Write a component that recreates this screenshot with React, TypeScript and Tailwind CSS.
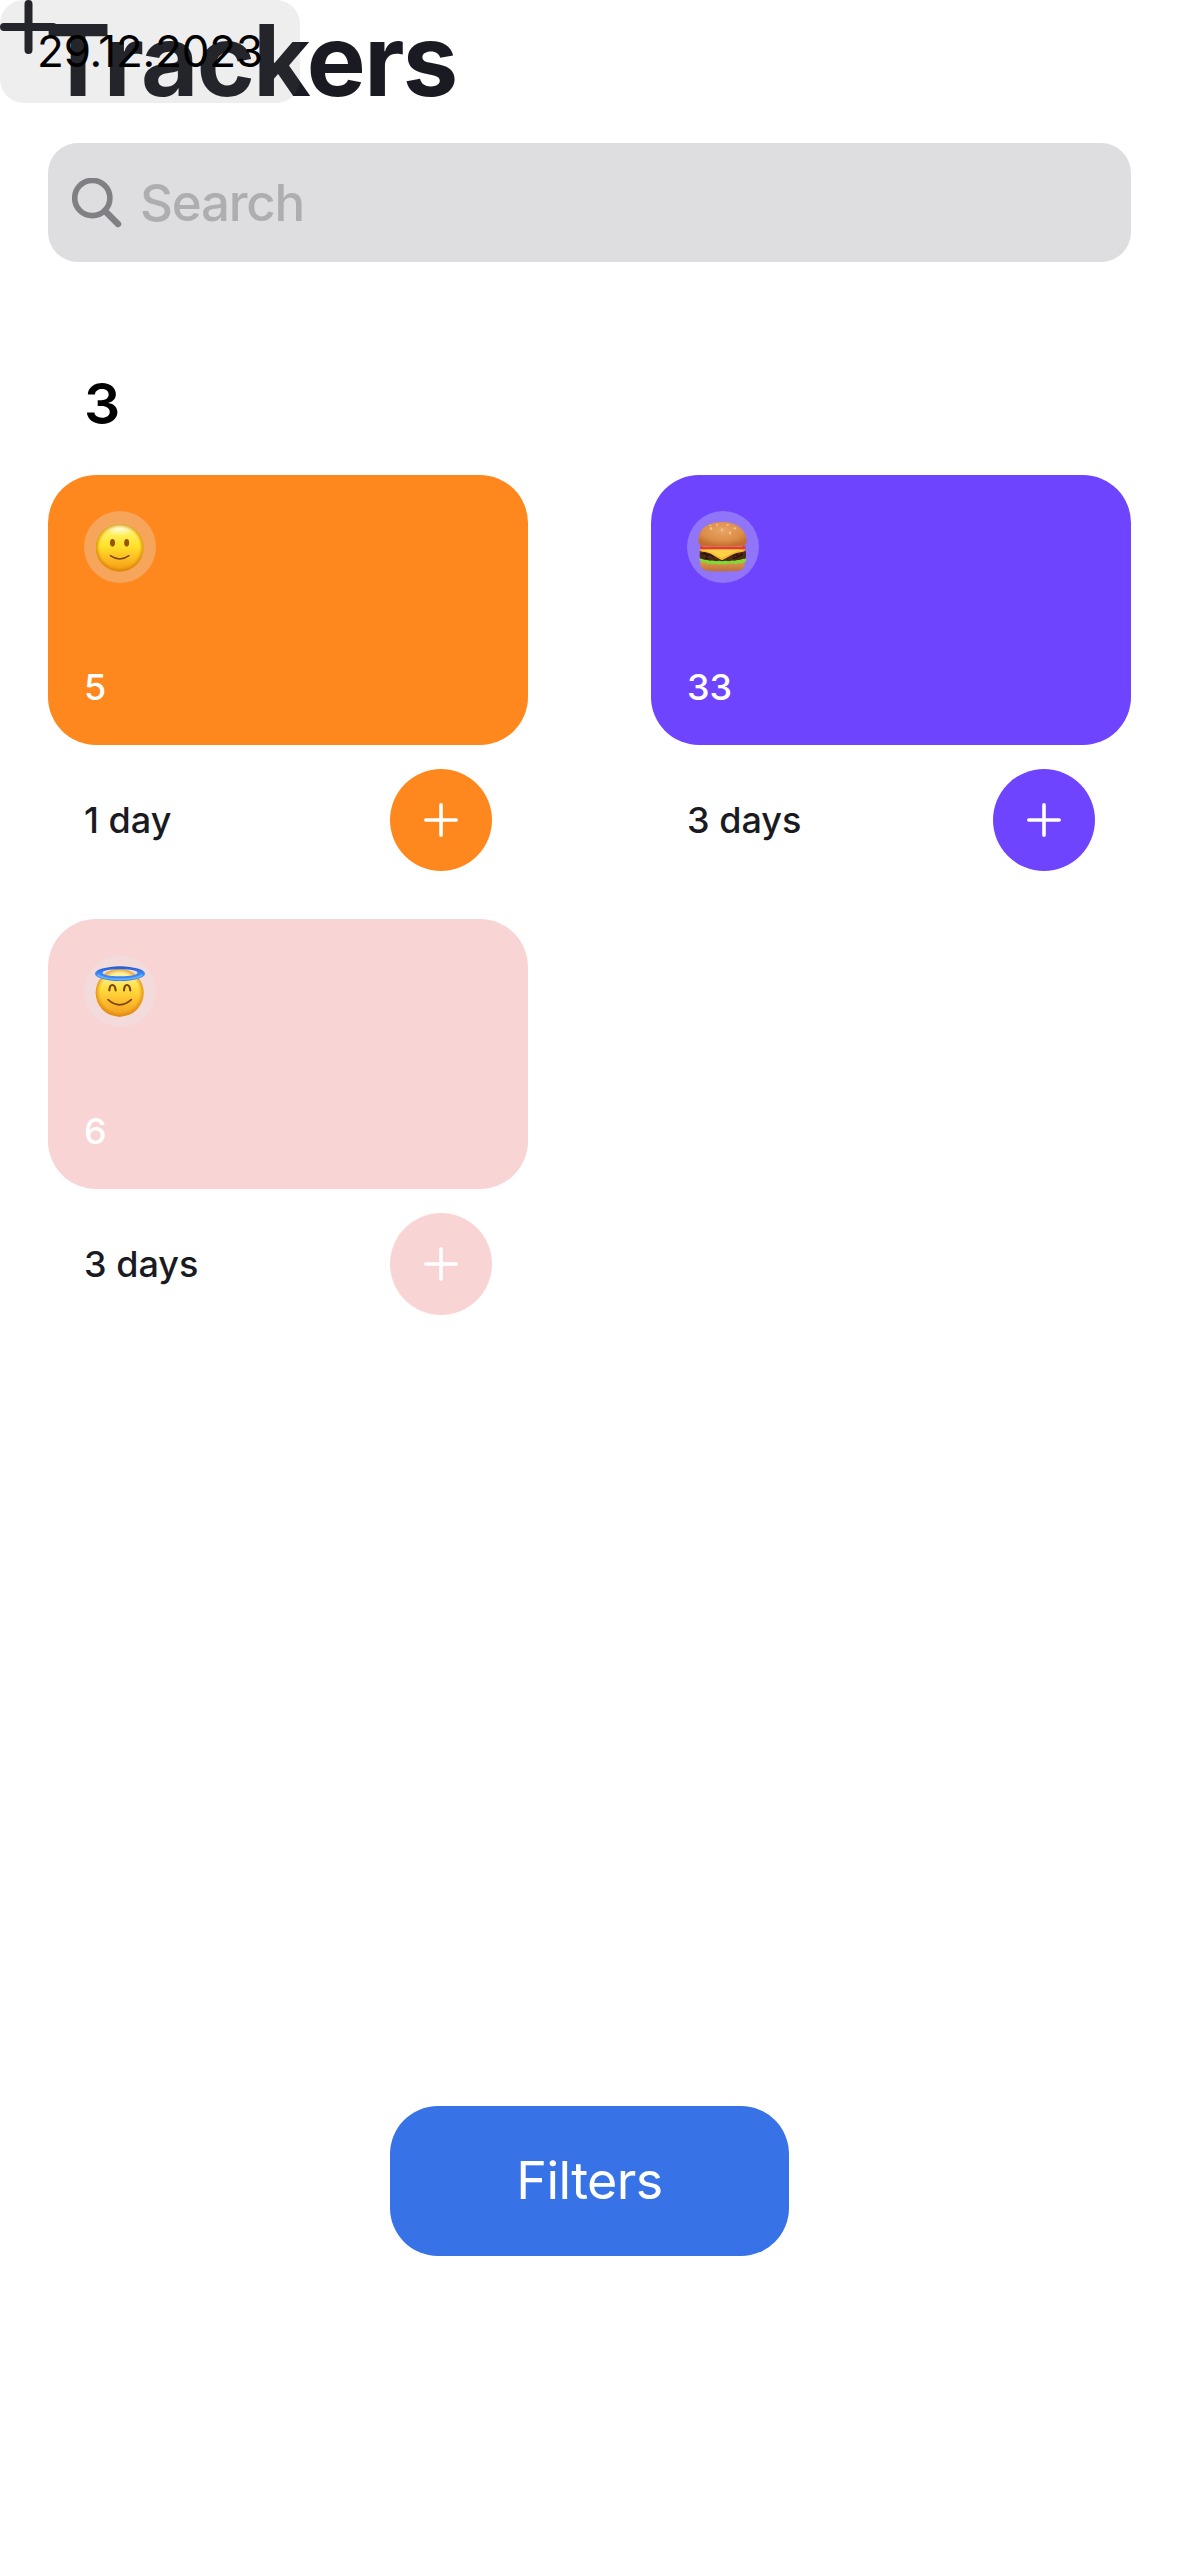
import React from "react";

function SmileEmoji() {
  return (
    <svg viewBox="12 33 216 216" className="size-[72px]">
      <defs>
        <linearGradient id="smileFace" x1="0" y1="0" x2="0" y2="1">
          <stop offset="0" stopColor="#fdf08c" />
          <stop offset="0.2" stopColor="#fff05c" />
          <stop offset="0.48" stopColor="#ffe02b" />
          <stop offset="0.75" stopColor="#fdb922" />
          <stop offset="1" stopColor="#ef9a10" />
        </linearGradient>
        <radialGradient id="smileEdge">
          <stop offset="0.82" stopColor="#d98200" stopOpacity="0" />
          <stop offset="1" stopColor="#d07a00" stopOpacity="0.75" />
        </radialGradient>
        <radialGradient id="smileShine">
          <stop offset="0" stopColor="#fff" stopOpacity="0.7" />
          <stop offset="1" stopColor="#fff" stopOpacity="0" />
        </radialGradient>
      </defs>
      <circle cx="119" cy="142.500" r="72" fill="url(#smileFace)" />
      <ellipse cx="119" cy="88" rx="46" ry="20" fill="url(#smileShine)" />
      <circle cx="119" cy="142.500" r="72" fill="url(#smileEdge)" />
      <ellipse cx="97.500" cy="128.500" rx="7.500" ry="11.500" fill="#96560a" />
      <ellipse cx="140" cy="128.500" rx="7.500" ry="11.500" fill="#96560a" />
      <path d="M91 167q28 20 56 0" fill="none" stroke="#7c450b" strokeWidth="4" strokeLinecap="round" />
    </svg>
  );
}

function BurgerEmoji() {
  return (
    <svg viewBox="21 33 216 216" className="size-[72px]">
      <defs>
        <radialGradient id="bun" cx="0.5" cy="0.35" r="0.65">
          <stop offset="0" stopColor="#e8a566" />
          <stop offset="0.65" stopColor="#dc8d47" />
          <stop offset="1" stopColor="#c06d2f" />
        </radialGradient>
        <linearGradient id="bunBase" x1="0" y1="0" x2="0" y2="1">
          <stop offset="0" stopColor="#dc9453" />
          <stop offset="1" stopColor="#bd6f32" />
        </linearGradient>
      </defs>
      <path d="M60 186h134q1 17-9 23-8 5-57 5t-57-5q-12-7-11-23z" fill="url(#bunBase)" />
      <path d="M61 148h132q6 5 5 20-1 12-10 13-62 8-120 0-9-2-9-15 0-14 2-18z" fill="#4d2817" />
      <path d="M66 163l8-4 7 8 10-6 10 10m56-4l11-5 8 8 12-9M75 174l10 2m74-1l14-2" fill="none" stroke="#241109" strokeWidth="4" />
      <path d="M57 177q8-3 15 2 10 0 18 3 9-2 17 2 10-3 20 0 10-3 20 0 8-4 17-2 9-3 18-3 8-5 16-2 3 10-6 9-8 6-16 3-8 6-17 1-7 3-14 0-10 7-19 1-10 5-18 0-10 4-17 0-9 2-16-4-15 1-18-10z" fill="#7fda32" />
      <path d="M59 148q68-7 136 0 1 7-6 7-21 2-35 11l-25 13q-3 2-6 0l-25-14q-12-9-33-10-7-1-6-7z" fill="#fdb52d" />
      <path d="M62 150q67-5 129 0-27 4-44 14l-21 10q-2 1-24-12-15-8-40-12z" fill="#ffd146" />
      <rect x="60" y="137" width="137" height="11" rx="5.500" fill="#dc3e3b" />
      <path d="M67 139h120" stroke="#f17767" strokeWidth="3" />
      <path d="M55 123q0-25 18-41 20-16 54-16t55 17q18 17 18 40 0 12-10 14-62 4-124 0-10-2-11-14z" fill="url(#bun)" />
      <g fill="#f3c58c">
        <ellipse cx="93" cy="86" rx="4" ry="4" />
        <ellipse cx="111" cy="74" rx="3.500" ry="2.500" />
        <ellipse cx="126" cy="89" rx="3.500" ry="4.500" />
        <ellipse cx="143" cy="74" rx="3.500" ry="3" />
        <ellipse cx="150" cy="99" rx="3.500" ry="4.500" />
        <ellipse cx="165" cy="85" rx="3.500" ry="3.500" />
        <ellipse cx="91" cy="76" rx="3.500" ry="2" />
      </g>
    </svg>
  );
}

function AngelEmoji() {
  return (
    <svg viewBox="12 30 216 216" className="size-[72px]">
      <defs>
        <linearGradient id="angelFace" x1="0" y1="0" x2="0" y2="1">
          <stop offset="0" stopColor="#fff9bd" />
          <stop offset="0.4" stopColor="#ffdf42" />
          <stop offset="0.7" stopColor="#fdbc2b" />
          <stop offset="1" stopColor="#ef9a20" />
        </linearGradient>
        <radialGradient id="angelEdge">
          <stop offset="0.8" stopColor="#e08a10" stopOpacity="0" />
          <stop offset="1" stopColor="#d87e0c" stopOpacity="0.75" />
        </radialGradient>
        <linearGradient id="halo" x1="0" y1="0" x2="0" y2="1">
          <stop offset="0" stopColor="#2455cf" />
          <stop offset="0.5" stopColor="#3d8bf5" />
          <stop offset="1" stopColor="#3b7df0" />
        </linearGradient>
      </defs>
      <circle cx="119" cy="143" r="72" fill="url(#angelFace)" />
      <circle cx="119" cy="143" r="72" fill="url(#angelEdge)" />
      <path d="M45 86a75 22 0 0 1 150 0 75 22 0 0 1-150 0zm23-3q0 10 52 11 52-1 52-11 0-9-52-10-52 1-52 10z" fill="url(#halo)" fillRule="evenodd" />
      <path d="M54 91q20 12 66 12t66-12" fill="none" stroke="#62b4ff" strokeWidth="5" strokeLinecap="round" />
      <path d="M88 136q1-16 9-16t10 16M132 136q1-16 9-16t10 16" fill="none" stroke="#7a460c" strokeWidth="6.500" strokeLinecap="round" />
      <path d="M84 164q35 31 70 0" fill="none" stroke="#7a420c" strokeWidth="5" strokeLinecap="round" />
    </svg>
  );
}

type Tracker = {
  name: string;
  days: string;
  color: string;
  Emoji: () => React.JSX.Element;
};

const trackers: Tracker[] = [
  { name: "5", days: "1 day", color: "bg-[#ff881e]", Emoji: SmileEmoji },
  { name: "33", days: "3 days", color: "bg-[#6e44fe]", Emoji: BurgerEmoji },
  { name: "6", days: "3 days", color: "bg-[#f9d4d4]", Emoji: AngelEmoji },
];

function TrackerCard({ name, days, color, Emoji }: Tracker) {
  return (
    <article className="h-[444px] w-[480px]">
      <div className={`flex h-[270px] flex-col justify-between rounded-[48px] px-9 pt-9 pb-[35px] ${color}`}>
        <div className="size-[72px] overflow-hidden rounded-full bg-[#e6e8eb4d]">
          <Emoji />
        </div>
        <span className="h-[45px] text-[36px] leading-[44px] font-medium text-white">{name}</span>
      </div>
      <div className="mt-6 flex h-[102px] items-center justify-between px-9">
        <span className="text-[36px] leading-[54px] font-medium text-[#1a1b22]">{days}</span>
        <button aria-label="Add day" className={`flex size-[102px] items-center justify-center rounded-full ${color}`}>
          <svg viewBox="0 0 34 34" className="size-[34px]" stroke="white" strokeWidth="3.600" strokeLinecap="round">
            <path d="M17 1.800v30.400M1.800 17h30.400" />
          </svg>
        </button>
      </div>
    </article>
  );
}

export default function App() {
  return (
    <main className="relative flex h-[2556px] w-[1179px] flex-col bg-white font-['Inter',sans-serif]">
      <h1 className="h-[143px] pl-[45px] text-[99px] leading-[120px] font-bold tracking-[-1.700px] text-[#1a1b22]">
        Trackers
      </h1>
      <svg viewBox="0 0 57 54" className="absolute top-0 left-0 h-[54px] w-[57px]" stroke="#1a1b22" strokeWidth="8" strokeLinecap="round">
        <path d="M28.500 4v46M4 27h49" />
      </svg>
      <div className="absolute top-0 left-0 flex h-[103px] w-[300px] items-center rounded-[24px] bg-[#7272721f] pb-[2px] pl-[37px] text-[44px] tracking-[-0.200px] text-black">
        29.12.2023
      </div>

      <div className="mx-12 flex h-[119px] shrink-0 items-center rounded-[30px] bg-[#dedee0] pl-6">
        <svg viewBox="0 0 50 50" className="size-[50px] shrink-0" fill="none" stroke="#808084" strokeLinecap="round">
          <circle cx="20.300" cy="20" r="17.600" strokeWidth="5.600" />
          <path d="M33 33l13 13" strokeWidth="6.500" />
        </svg>
        <span className="ml-[18px] pt-[2px] text-[51px] font-[450] tracking-[-1.200px] text-[#aeaeb0]">Search</span>
      </div>

      <h2 className="mt-[107px] pl-[84px] text-[57px] leading-[69px] font-semibold text-black">3</h2>
      <section className="mx-12 mt-[37px] flex flex-wrap justify-between">
        {trackers.map((t) => (
          <TrackerCard key={t.name} {...t} />
        ))}
      </section>

      <button className="mx-auto mt-auto mb-[300px] h-[150px] w-[399px] shrink-0 rounded-[48px] bg-[#3772e7] text-[52px] tracking-[-0.600px] text-white">
        Filters
      </button>
    </main>
  );
}
